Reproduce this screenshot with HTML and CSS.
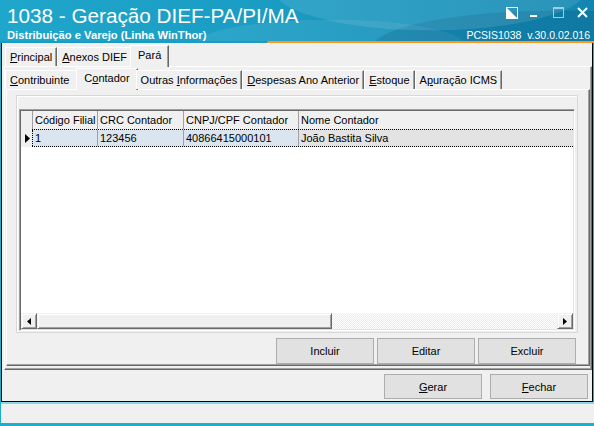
FILE: index.html
```html
<!DOCTYPE html>
<html>

<head>
    <title>1038 - Geração DIEF-PA/PI/MA</title>
    <link rel="stylesheet" href="styles.css">
</head>

<body>
    <div class="app">
        <header class="titlebar">
            <div class="titles">
                <div class="title">1038 - Geração DIEF-PA/PI/MA</div>
                <div class="subtitle">Distribuição e Varejo (Linha WinThor)</div>
            </div>
            <div class="side">
                <div class="controls">
                    <svg class="ctl-theme" width="12" height="12" viewBox="0 0 12 12">
                        <rect x="0.5" y="0.5" width="11" height="11" fill="none" stroke="#fff" />
                        <polygon points="0,0 0,12 12,12" fill="#fff" />
                    </svg>
                    <svg class="ctl-min" width="7" height="11" viewBox="0 0 7 11">
                        <rect x="0" y="8" width="7" height="2" fill="#fff" />
                    </svg>
                    <svg class="ctl-max" width="11" height="11" viewBox="0 0 11 11">
                        <rect x="0.5" y="0.5" width="10" height="10" fill="none" stroke="#9fcfdd" />
                        <rect x="0" y="0" width="11" height="2" fill="#9fcfdd" />
                    </svg>
                    <svg class="ctl-close" width="11" height="11" viewBox="0 0 11 11">
                        <path d="M1 1 L10 10 M10 1 L1 10" stroke="#fff" stroke-width="2" />
                    </svg>
                </div>
                <div class="version">PCSIS1038  v.30.0.02.016</div>
            </div>
        </header>
        <div class="accent"></div>

        <div class="window">
            <div class="tabs outer-tabs">
                <div class="tab"><u>P</u>rincipal</div>
                <div class="tab"><u>A</u>nexos DIEF</div>
                <div class="tab active">Pará</div>
            </div>

            <div class="page outer-page">
                <div class="tabs inner-tabs">
                    <div class="tab wide"><u>C</u>ontribuinte</div>
                    <div class="tab active">C<u>o</u>ntador</div>
                    <div class="tab">Outras <u>I</u>nformações</div>
                    <div class="tab"><u>D</u>espesas Ano Anterior</div>
                    <div class="tab"><u>E</u>stoque</div>
                    <div class="tab">A<u>p</u>uração ICMS</div>
                </div>

                <div class="page inner-page">
                    <div class="group">
                        <div class="grid">
                            <div class="grid-head">
                                <div class="indicator"></div>
                                <div class="cell col-filial">Código Filial</div>
                                <div class="cell col-crc">CRC Contador</div>
                                <div class="cell col-cnpj">CNPJ/CPF Contador</div>
                                <div class="cell col-nome">Nome Contador</div>
                            </div>
                            <div class="grid-row">
                                <div class="indicator">
                                    <svg width="5" height="9" viewBox="0 0 5 9">
                                        <polygon points="0,0 5,4.5 0,9" fill="#000" />
                                    </svg>
                                </div>
                                <div class="cells">
                                    <div class="cell col-filial">1</div>
                                    <div class="cell col-crc">123456</div>
                                    <div class="cell col-cnpj">40866415000101</div>
                                    <div class="cell col-nome">João Bastita Silva</div>
                                </div>
                            </div>
                            <div class="grid-body"></div>
                            <div class="hscroll">
                                <div class="sb-btn">
                                    <svg width="4" height="7" viewBox="0 0 4 7">
                                        <polygon points="4,0 0,3.5 4,7" fill="#000" />
                                    </svg>
                                </div>
                                <div class="sb-thumb"></div>
                                <div class="sb-track"></div>
                                <div class="sb-btn">
                                    <svg width="4" height="7" viewBox="0 0 4 7">
                                        <polygon points="0,0 4,3.5 0,7" fill="#000" />
                                    </svg>
                                </div>
                            </div>
                        </div>
                    </div>

                    <div class="actions">
                        <button class="btn">Incluir</button>
                        <button class="btn">Editar</button>
                        <button class="btn">Excluir</button>
                    </div>
                </div>
            </div>

            <div class="footer">
                <button class="btn"><u>G</u>erar</button>
                <button class="btn"><u>F</u>echar</button>
            </div>
        </div>

        <div class="status"></div>
    </div>
</body>

</html>
```

FILE: styles.css
```css
body {
    margin: 0;
    font-family: "Liberation Sans", Arial, sans-serif;
    font-size: 11px;
    color: #000;
}

.app {
    width: 594px;
    height: 426px;
    display: flex;
    flex-direction: column;
    background: #19b0c8;
    overflow: hidden;
}

/* title bar */

.titlebar {
    height: 41px;
    display: flex;
    justify-content: space-between;
    color: #fff;
    background:
        radial-gradient(ellipse 260px 70px at 430px -12px, rgba(255, 255, 255, 0.10) 0 60%, transparent 61%),
        radial-gradient(ellipse 300px 60px at 560px 48px, rgba(0, 50, 90, 0.16) 0 62%, transparent 63%),
        radial-gradient(ellipse 220px 40px at 330px 44px, rgba(255, 255, 255, 0.07) 0 60%, transparent 61%),
        linear-gradient(90deg, #1fa6cb 0%, #1a9cc3 45%, #1286b0 100%);
}

.titles {
    padding: 4px 0 0 7px;
}

.title {
    font-size: 20.7px;
    line-height: 23px;
}

.subtitle {
    margin-top: 2px;
    font-size: 11.2px;
    line-height: 13px;
    font-weight: bold;
}

.side {
    display: flex;
    flex-direction: column;
    align-items: flex-end;
    padding: 7px 4px 0 0;
}

.controls {
    display: flex;
    align-items: flex-start;
    height: 11px;
    margin-right: 2px;
}

.controls svg {
    display: block;
}

.ctl-min {
    margin-left: 12px;
}

.ctl-max {
    margin-left: 16px;
}

.ctl-close {
    margin-left: 13px;
}

.version {
    margin-top: 11px;
    font-size: 10.5px;
    line-height: 12px;
    white-space: pre;
}

.accent {
    height: 2px;
    background: linear-gradient(90deg, #1a9cc3 0, #1a9cc3 267px, #f39a1f 268px, #f39a1f 100%);
}

/* main window */

.window {
    flex: 1;
    margin: 0 1px;
    padding-top: 4px;
    display: flex;
    flex-direction: column;
    background: #f0f0f0;
    border-left: 1px solid #000;
    border-right: 1px solid #000;
    border-bottom: 1px solid #000;
}

.tabs {
    display: flex;
    align-items: flex-end;
    position: relative;
    z-index: 1;
}

.tab {
    height: 18px;
    line-height: 18px;
    padding: 0 4px;
    background: #f0f0f0;
    border-top: 1px solid #fff;
    border-left: 1px solid #fff;
    border-right: 1px solid #696969;
    box-shadow: inset -1px 0 #a0a0a0;
    white-space: nowrap;
}

.tab.active {
    height: 21px;
    line-height: 19px;
    margin: 0 -2px -1px -2px;
    padding: 0 7px;
}

.tab.wide {
    padding-right: 8px;
}

.tab u {
    text-decoration-thickness: 1px;
    text-underline-offset: 1px;
}

.outer-tabs {
    height: 19px;
    margin-left: 3px;
}

.page {
    display: flex;
    flex-direction: column;
    background: #f0f0f0;
    border-top: 1px solid #fff;
    border-left: 1px solid #fff;
    border-right: 1px solid #696969;
    border-bottom: 1px solid #696969;
    box-shadow: inset -1px -1px #a0a0a0;
}

.outer-page {
    height: 304px;
    box-sizing: border-box;
    margin-left: 2px;
    padding-bottom: 2px;
}

.inner-tabs {
    height: 21px;
    margin: 1px 0 0 0;
}

.inner-page {
    height: 277px;
    box-sizing: border-box;
    margin: 0 1px;
    padding: 5px 13px 1px 9px;
}

/* group box with the grid */

.group {
    height: 238px;
    box-sizing: border-box;
    padding: 13px 2px 1px 2px;
    border: 1px solid #d8d8d8;
    box-shadow: inset 1px 1px #fff;
    margin-right: -2px;
}

.grid {
    height: 222px;
    box-sizing: border-box;
    display: flex;
    flex-direction: column;
    background: #fff;
    border-top: 1px solid #a0a0a0;
    border-left: 1px solid #a0a0a0;
    border-right: 1px solid #fff;
    border-bottom: 1px solid #fff;
    box-shadow: inset 1px 1px #696969, inset -1px -1px #e3e3e3;
    padding: 1px;
}

.grid-head,
.grid-row {
    display: flex;
    height: 18px;
    flex: none;
}

.grid-head {
    background: #f0f0f0;
    line-height: 18px;
}

.indicator {
    width: 11px;
    flex: none;
    background: #f0f0f0;
    display: flex;
    align-items: center;
    justify-content: center;
}

.indicator svg {
    display: block;
    margin-left: 1px;
}

.cell {
    box-sizing: border-box;
    padding-left: 2px;
    border-left: 1px solid #a0a0a0;
    white-space: nowrap;
    overflow: hidden;
}

.col-filial {
    width: 65px;
}

.col-crc {
    width: 86px;
}

.col-cnpj {
    width: 115px;
}

.col-nome {
    flex: 1;
}

.cells {
    flex: 1;
    display: flex;
    border-top: 1px dotted #000;
    border-bottom: 1px dotted #000;
    line-height: 16px;
    background: #dbe5f0;
}

.cells .col-filial {
    border-left: 1px dotted #000;
}

.cells .col-nome {
    background: #e3e3e3;
}

.grid-body {
    flex: 1;
}

/* horizontal scrollbar */

.hscroll {
    height: 16px;
    flex: none;
    display: flex;
}

.sb-btn,
.sb-thumb {
    box-sizing: border-box;
    background: #f0f0f0;
    border-top: 1px solid #f0f0f0;
    border-left: 1px solid #f0f0f0;
    border-right: 1px solid #696969;
    border-bottom: 1px solid #696969;
    box-shadow: inset 1px 1px #fff, inset -1px -1px #a0a0a0;
}

.sb-btn {
    width: 16px;
    display: flex;
    align-items: center;
    justify-content: center;
}

.sb-thumb {
    width: 295px;
}

.sb-track {
    flex: 1;
    background: repeating-conic-gradient(#fff 0 25%, #ececec 0 50%) 0 0 / 2px 2px;
}

/* buttons */

.actions {
    display: flex;
    justify-content: flex-end;
    gap: 3px;
    margin-top: 5px;
}

.footer {
    flex: 1;
    display: flex;
    justify-content: flex-end;
    gap: 8px;
    padding: 4px 4px 0 0;
}

.btn {
    width: 98px;
    height: 26px;
    padding: 0;
    font-family: "Liberation Sans", Arial, sans-serif;
    font-size: 11px;
    color: #000;
    background: #e1e1e1;
    border: 1px solid #adadad;
    border-radius: 0;
}

.footer .btn {
    height: 25px;
}

/* status bar */

.status {
    height: 19px;
    margin: 0 0 3px 1px;
    background: #f0f0f0;
    border-top: 2px solid #86d8e6;
}
```
